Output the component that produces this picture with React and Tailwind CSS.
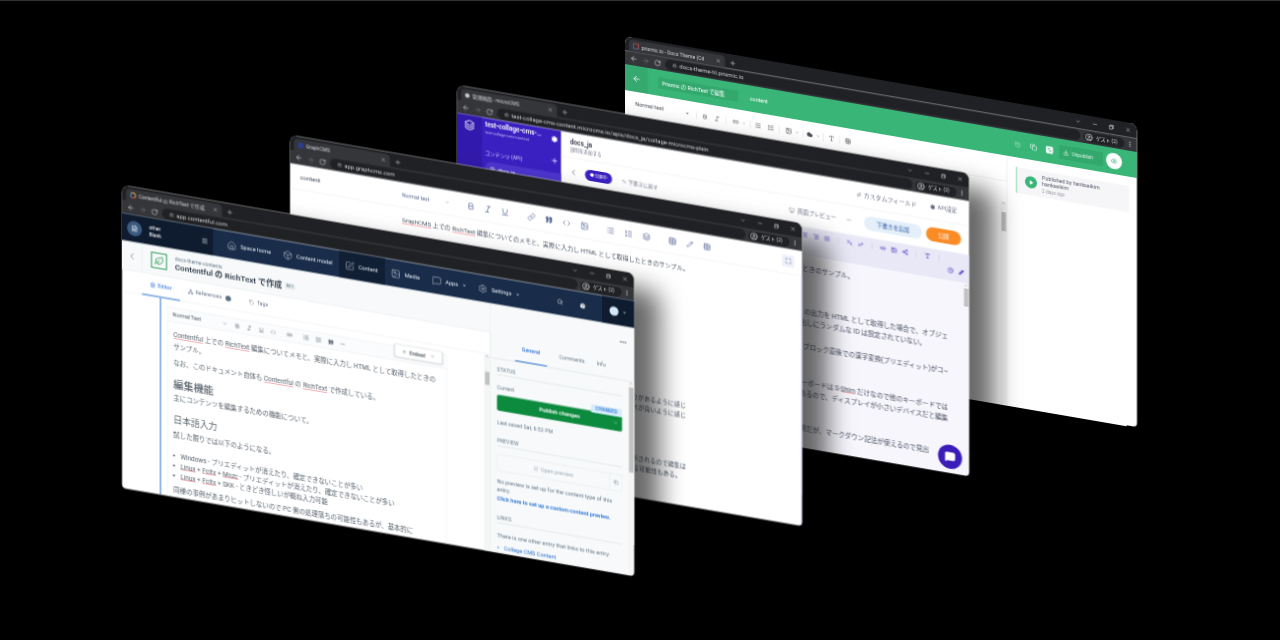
import {
  ArrowLeft, ArrowRight, RotateCw, Lock, Plus, X, Minus, ChevronDown, ChevronLeft, CircleUser, EllipsisVertical,
  Ellipsis, Copy, Home, Box, SquarePen, Image, Settings, Search, CircleHelp, FileText, Network, Tag, Bold, Italic,
  Underline, Code, Link2, List, ListOrdered, Quote, Leaf, Menu, Link, Table, Pencil, Maximize, Paperclip, Share2,
  Eye, Download, History, Languages, Cloud, Play, MessageSquare, Undo2, Monitor, Superscript, Subscript, AlignCenter,
  AlignLeft, AlignRight, AlignJustify, Type, Layers,
} from 'lucide-react'

function RestoreIcon() {
  return <svg width="10" height="10" viewBox="0 0 10 10" fill="none" stroke="currentColor" strokeWidth="1.2"><rect x="1" y="3" width="6" height="6" /><path d="M3 3V1h6v6H7" /></svg>
}

// Chrome guest window, laid out at twice its on-screen size
function Browser({ pos, favicon, title, url, children }) {
  return (
    <div className={`absolute left-0 top-0 flex h-[606px] w-[1024px] origin-top-left flex-col overflow-hidden rounded-t-[14px] rounded-b-[8px] bg-white blur-[1.3px] ${pos}`}>
      <div className="flex h-[29px] shrink-0 items-end bg-[#202124] pl-[8px]">
        <div className="flex h-[24px] w-[192px] items-center gap-[5px] rounded-t-[8px] bg-[#35363a] px-[8px] text-[#d5d6d8]">
          {favicon}
          <span className="flex-1 whitespace-nowrap text-[10px]">{title}</span>
          <X size={11} className="shrink-0" />
        </div>
        <div className="flex h-[24px] w-[30px] items-center justify-center text-[#d5d6d8]"><Plus size={13} /></div>
        <div className="flex-1" />
        <div className="flex h-[29px] w-[124px] items-center justify-between pr-[12px] text-[#d5d6d8]">
          <ChevronDown size={12} />
          <Minus size={12} />
          <RestoreIcon />
          <X size={12} />
        </div>
      </div>
      <div className="flex h-[27px] shrink-0 items-center bg-[#35363a] pl-[10px] pr-[8px] text-[#d5d6d8]">
        <ArrowLeft size={15} className="mr-[9px]" />
        <ArrowRight size={15} className="mr-[9px] text-[#75767a]" />
        <RotateCw size={14} className="mr-[8px]" />
        <div className="flex h-[21px] flex-1 items-center gap-[5px] rounded-full bg-[#202124] px-[15px]">
          <Lock size={9} />
          <span className="whitespace-nowrap text-[11.7px] text-[#c9cacc]">{url}</span>
        </div>
        <div className="ml-[6px] flex h-[20px] w-[82px] items-center gap-[6px] rounded-full bg-[#202124] px-[3px]">
          <CircleUser size={16} />
          <span className="text-[9.5px]">ゲスト (2)</span>
        </div>
        <EllipsisVertical size={13} className="ml-[4px]" />
      </div>
      {children}
    </div>
  )
}

function Misspelt({ children }) {
  return <span className="underline decoration-[#e8616b] decoration-1 underline-offset-2">{children}</span>
}

function Scrollbar({ thumb = 'mt-[14px] h-[42px]', className = '' }) {
  return (
    <div className={`flex w-[12px] shrink-0 flex-col items-center bg-[#f5f5f5] ${className}`}>
      <ChevronDown size={8} className="shrink-0 rotate-180 text-[#555]" />
      <div className={`w-[9px] shrink-0 bg-[#c1c1c1] ${thumb}`} />
    </div>
  )
}

function NavItem({ icon: Icon, label, className, active, caret }) {
  return (
    <div className={`flex h-full items-center gap-[8px] text-[#dfe5ee] ${className} ${active ? 'bg-[#111f35]' : ''}`}>
      <Icon size={19} strokeWidth={1.2} />
      <span className="text-[11px]">{label}</span>
      {caret && <ChevronDown size={9} fill="currentColor" />}
    </div>
  )
}

function SideHeading({ children, className = '' }) {
  return <div className={`border-b border-[#d3dce0] pb-[3px] text-[10px] leading-[14px] tracking-wide text-[#6b7c8d] ${className}`}>{children}</div>
}

function ContentfulWindow() {
  return (
    <Browser
      pos="[transform:matrix(0.5,0.086,0,0.5,122,185)]"
      favicon={<span className="size-[12px] shrink-0 rounded-full border-2 border-[#e8b04a] border-b-[#d9534f] border-l-[#4a90d9]" />}
      title="Contentful の RichText で作成"
      url="app.contentful.com"
    >
      <div className="flex h-[54px] shrink-0 bg-[#192d4a] text-white">
        <div className="flex w-[182px] items-center bg-[#0f1c30] pl-[10px]">
          <div className="flex size-[30px] items-center justify-center rounded-full bg-[#3a5a80]"><FileText size={14} /></div>
          <div className="ml-[14px] flex-1 text-[10px] leading-[14px]">
            <div>other</div>
            <div>Blank</div>
          </div>
          <Menu size={13} className="mr-[10px]" />
        </div>
        <NavItem icon={Home} label="Space home" className="w-[126px] pl-[28px]" />
        <NavItem icon={Box} label="Content model" className="w-[126px] pl-[14px]" />
        <NavItem icon={SquarePen} label="Content" className="w-[92px] pl-[12px]" active />
        <NavItem icon={Image} label="Media" className="w-[82px] pl-[12px]" />
        <NavItem icon={MessageSquare} label="Apps" className="w-[92px] pl-[12px]" caret />
        <NavItem icon={Settings} label="Settings" className="w-[100px] pl-[12px]" caret />
        <div className="flex flex-1 items-center gap-[33px] pl-[70px]">
          <Search size={12} />
          <CircleHelp size={13} fill="white" className="text-[#192d4a]" />
        </div>
        <div className="flex w-[64px] items-center justify-center gap-[8px] bg-[#0f1c30]">
          <span className="size-[18px] rounded-full bg-[#d5e8fa]" />
          <ChevronDown size={8} fill="currentColor" />
        </div>
      </div>
      <div className="flex min-h-0 flex-1">
        <div className="flex w-[737px] flex-col border-r border-[#d3dce0]">
          <div className="flex h-[58px] shrink-0 items-center border-b border-[#e5ebed] bg-[#f7f9fa]">
            <div className="flex h-full w-[40px] items-center justify-center border-r border-[#e5ebed] text-[#8091a5]"><ChevronLeft size={20} /></div>
            <div className="ml-[18px] flex size-[32px] items-center justify-center border-2 border-[#2e9e5b] text-[#2e9e5b]"><Leaf size={20} /></div>
            <div className="ml-[16px]">
              <div className="text-[10px] leading-[12px] text-[#6b7c8d]">docs-theme-contents</div>
              <div className="flex items-center gap-[6px] text-[16px] font-semibold leading-[20px] text-[#36404d]">
                Contentful の RichText で作成
                <span className="rounded-[2px] bg-[#e5ebed] px-[3px] text-[8px] font-normal leading-[12px]">ID 1</span>
              </div>
            </div>
          </div>
          <div className="flex h-[45px] shrink-0 border-b border-[#e5ebed] pl-[40px] text-[10.5px] text-[#6b7c8d]">
            <div className="flex w-[76px] items-center justify-center gap-[4px] border-b-2 border-[#2e75d4] text-[11px] text-[#2e75d4]"><FileText size={11} />Editor</div>
            <div className="ml-[16px] flex items-center gap-[4px]"><Network size={11} />References<span className="ml-[4px] size-[11px] rounded-full bg-[#5a6f87]" /></div>
            <div className="ml-[36px] flex items-center gap-[4px]"><Tag size={11} />Tags</div>
          </div>
          <div className="flex min-h-0 flex-1 pl-[76px]">
            <div className="w-[2px] bg-[#2e75d4]" />
            <div className="relative ml-[12px] mt-[15px] flex w-[560px] flex-col border-x border-t border-[#e5ebed]">
              <div className="flex h-[27px] shrink-0 items-center border-b border-[#e5ebed] bg-[#fbfcfd] text-[#4c5864]">
                <span className="ml-[10px] w-[100px] text-[10.5px]">Normal Text</span>
                <ChevronDown size={10} />
                <div className="ml-[14px] flex items-center gap-[13px]">
                  <Bold size={11} /><Italic size={11} /><Underline size={11} /><Code size={11} />
                  <Link2 size={12} className="ml-[8px]" />
                  <List size={12} className="ml-[8px]" /><ListOrdered size={12} /><Quote size={11} fill="currentColor" /><Minus size={11} />
                </div>
              </div>
              <div className="absolute right-[8px] top-[-6px] flex h-[26px] w-[96px] items-center justify-center gap-[6px] rounded-[4px] border border-[#d3dce0] bg-white text-[10px] font-semibold text-[#4c5864] shadow-sm">
                <Plus size={9} />Embed<ChevronDown size={10} className="ml-[4px]" />
              </div>
              <div className="flex-1 pl-[12px] text-[12.7px] leading-[24px] text-[#59636e]">
                <p className="mt-[14px] w-[540px]"><Misspelt>Contentful</Misspelt> 上での <Misspelt>RichText</Misspelt> 編集についてメモと、実際に入力し HTML として取得したときの<br />サンプル。</p>
                <p className="mt-[8px] whitespace-nowrap">なお、このドキュメント自体も <Misspelt>Contentful</Misspelt> の <Misspelt>RichText</Misspelt> で作成している。</p>
                <h2 className="mt-[17px] text-[20px] font-medium leading-[28px]">編集機能</h2>
                <p className="mt-[1px]">主にコンテンツを編集するための機能について。</p>
                <h3 className="mt-[17px] text-[17.5px] leading-[28px]">日本語入力</h3>
                <p className="mt-[5px]">試した限りでは以下のようになる。</p>
                <ul className="mt-[19px] list-disc pl-[14px] leading-[20px]">
                  <li>Windows - プリエディットが消えたり、確定できないことが多い</li>
                  <li className="whitespace-nowrap"><Misspelt>Linux</Misspelt> + <Misspelt>Fcitx</Misspelt> + <Misspelt>Mozc</Misspelt> - プリエディットが消えたり、確定できないことが多い</li>
                  <li className="whitespace-nowrap"><Misspelt>Linux</Misspelt> + <Misspelt>Fcitx</Misspelt> + SKK - ときどき怪しいが概ね入力可能</li>
                </ul>
                <p className="mt-[7px] whitespace-nowrap">同様の事例があまりヒットしないので PC 側の処理落ちの可能性もあるが、基本的に</p>
              </div>
            </div>
            <div className="flex-1" />
            <Scrollbar thumb="mt-[27px] h-[26px]" />
          </div>
        </div>
        <div className="flex min-w-0 flex-1 flex-col bg-[#f7f9fa]">
          <div className="flex h-[58px] shrink-0 justify-end pr-[14px] pt-[24px] text-[#36404d]"><Ellipsis size={16} /></div>
          <div className="flex h-[50px] shrink-0 items-end gap-[24px] border-b border-[#d3dce0] pl-[49px] text-[10.5px] text-[#6b7c8d]">
            <div className="w-[64px] border-b-2 border-[#2e75d4] pb-[16px] text-center font-medium text-[#2e75d4]">General</div>
            <div className="pb-[16px]">Comments</div>
            <div className="pb-[16px]">Info</div>
          </div>
          <div className="flex min-h-0 flex-1">
            <div className="min-w-0 flex-1 pl-[13px] pr-[12px] pt-[14px] text-[11px] text-[#6b7c8d]">
              <SideHeading>STATUS</SideHeading>
              <div className="mt-[19px] text-[10.5px] leading-[14px]">Current</div>
              <div className="relative mt-[7px] flex h-[32px] items-center justify-center rounded-[4px] bg-[#0c8a3e] text-[11px] font-semibold text-white">
                Publish changes
                <ChevronDown size={10} className="absolute right-[8px]" />
                <span className="absolute right-0 top-[-13px] flex h-[16px] w-[62px] items-center justify-center rounded-[2px] bg-[#d5ecfb] text-[9px] font-semibold tracking-wide text-[#2e75d4]">CHANGED</span>
              </div>
              <div className="mt-[17px] text-[10.5px] leading-[14px]">Last saved Sat, 6:52 PM</div>
              <SideHeading className="mt-[22px]">PREVIEW</SideHeading>
              <div className="mt-[15px] flex h-[34px]">
                <div className="flex flex-1 items-center justify-center gap-[4px] rounded-l-[3px] border border-[#e5ebed] text-[11px] text-[#a5b0bb]"><SquarePen size={10} />Open preview</div>
                <div className="flex w-[24px] items-center justify-center border-y border-r border-[#e5ebed]"><Copy size={10} /></div>
              </div>
              <p className="mt-[13px] leading-[16px]">No preview is set up for the content type of this entry.</p>
              <p className="mt-[4px] whitespace-nowrap font-semibold leading-[14px] text-[#2e75d4]">Click here to set up a custom content preview.</p>
              <SideHeading className="mt-[24px]">LINKS</SideHeading>
              <p className="mt-[18px] whitespace-nowrap leading-[14px]">There is one other entry that links to this entry:</p>
              <ul className="mt-[9px] list-disc pl-[14px] leading-[14px] text-[#2e75d4]"><li>College CMS Content</li></ul>
            </div>
            <Scrollbar thumb="mt-[4px] h-[170px]" />
          </div>
        </div>
      </div>
    </Browser>
  )
}

function GraphcmsWindow() {
  return (
    <Browser
      pos="[transform:matrix(0.5,0.086,0,0.5,290,135)]"
      favicon={<span className="size-[11px] shrink-0 rounded-[2px] bg-[#2c3e8f]" />}
      title="GraphCMS"
      url="app.graphcms.com"
    >
      <div className="flex h-[50px] shrink-0 items-center border-b border-[#e8eaf6] text-[#5c6a99]">
        <span className="ml-[20px] w-[204px] text-[12px] text-[#3f4a5c]">content</span>
        <span className="w-[86px] text-[10.5px]">Normal text</span>
        <ChevronDown size={9} />
        <div className="ml-[26px] flex items-center">
          <Bold size={17} className="w-[34px]" />
          <Italic size={17} className="w-[34px]" />
          <Underline size={17} className="w-[34px]" />
          <Link size={16} className="ml-[18px] w-[36px]" />
          <Quote size={15} fill="currentColor" className="w-[34px]" />
          <Code size={16} className="w-[36px]" />
          <Image size={16} className="w-[36px]" />
          <List size={16} className="ml-[16px] w-[36px]" />
          <ListOrdered size={16} className="w-[36px]" />
          <Layers size={16} className="w-[36px]" />
          <Table size={16} className="ml-[16px] w-[36px]" />
          <Pencil size={14} className="w-[34px]" />
          <Table size={15} className="w-[34px]" />
        </div>
        <div className="flex-1" />
        <div className="mr-[16px] flex size-[24px] items-center justify-center rounded-[3px] bg-[#eef0fa]"><Maximize size={13} /></div>
      </div>
      <div className="flex-1 border-r-2 border-[#c8cdf2] leading-[20px] text-[#4a5464]">
        <p className="mt-[15px] text-center text-[12.1px]"><Misspelt>GraphCMS</Misspelt> 上での <Misspelt>RichText</Misspelt> 編集についてのメモと、実際に入力し HTML として取得したときのサンプル。</p>
        <div className="ml-auto mr-[230px] mt-[254px] text-right text-[12px]">
          <p>りがあるように感じ</p>
          <p>スが良いように感じ</p>
          <p className="mt-[82px]">示されるので編集は</p>
          <p className="pr-[10px]">る可能性もある。</p>
        </div>
      </div>
    </Browser>
  )
}

function ToolDivider() {
  return <span className="mx-[6px] h-[12px] w-px bg-[#c5c5dc]" />
}

function MicrocmsWindow() {
  return (
    <Browser
      pos="[transform:matrix(0.5,0.086,0,0.5,457,85)]"
      favicon={<span className="size-[9px] shrink-0 rounded-full bg-[#c9cacc]" />}
      title="管理画面 - microCMS"
      url="test-collage-cms-content.microcms.io/apis/docs_ja/collage-microcms-plain"
    >
      <div className="flex min-h-0 flex-1">
        <div className="flex w-[208px] shrink-0 bg-[#3a1fc1] text-white">
          <div className="flex w-[50px] justify-center bg-[#3219ad] pt-[9px]"><Layers size={22} /></div>
          <div className="relative min-w-0 flex-1 pl-[6px] pt-[4px]">
            <div className="truncate text-[13px] font-semibold leading-[18px]">test-collage-cms-…</div>
            <div className="text-[8px] leading-[12px] text-[#c5bdf0]">test-collage-cms-content</div>
            <Settings size={14} fill="white" className="absolute right-[6px] top-[12px]" />
            <div className="mt-[30px] text-[10px] leading-[12px] text-[#d5d0f5]">コンテンツ (API)</div>
            <Plus size={16} className="absolute right-[5px] top-[54px]" />
            <div className="mt-[10px] flex h-[28px] items-center gap-[6px] rounded-l-full bg-[#4d35d0] pl-[10px] text-[10px]"><FileText size={10} />docs_ja</div>
          </div>
        </div>
        <div className="flex min-w-0 flex-1 flex-col">
          <div className="flex h-[50px] shrink-0 items-center border-b border-[#e8e8f0] text-[#6b6f85]">
            <div className="ml-[18px] flex-1">
              <div className="text-[13px] font-semibold leading-[16px] text-[#2f3345]">docs_ja</div>
              <div className="text-[9px] leading-[12px]">説明を追加する</div>
            </div>
            <span className="flex items-center gap-[4px] text-[12px]"><Paperclip size={10} />カスタムフィールド</span>
            <span className="ml-[26px] mr-[24px] flex items-center gap-[4px] text-[11px]"><Settings size={11} fill="currentColor" />API設定</span>
          </div>
          <div className="flex h-[58px] shrink-0 items-center text-[#6b6f85]">
            <ChevronLeft size={18} className="ml-[16px]" />
            <span className="ml-[14px] flex h-[22px] w-[54px] items-center justify-center gap-[2px] rounded-full bg-[#3a1fc1] text-[8px] text-white">● 公開中</span>
            <span className="ml-[20px] flex items-center gap-[3px] text-[10px]"><Undo2 size={9} />下書きに戻す</span>
            <div className="flex-1" />
            <span className="flex items-center gap-[6px] text-[11px]"><Monitor size={11} />画面プレビュー</span>
            <Minus size={12} className="ml-[20px]" />
            <span className="ml-[24px] flex h-[28px] w-[116px] items-center justify-center rounded-full bg-[#e4effa] text-[11px] text-[#2f5fa8]">下書きを追加</span>
            <span className="ml-[8px] mr-[16px] flex h-[28px] w-[70px] items-center justify-center rounded-full bg-[#fb8b24] text-[11px] text-white">公開</span>
          </div>
          <div className="flex h-[58px] shrink-0 flex-col bg-[#e8e8f6] pr-[10px] pt-[10px] text-[#3a1fc1]">
            <div className="flex items-center justify-end gap-[10px] pr-[44px]">
              <AlignLeft size={12} /><AlignCenter size={12} /><AlignRight size={12} /><AlignJustify size={12} />
              <ToolDivider />
              <Subscript size={12} /><Superscript size={12} />
              <ToolDivider />
              <Link2 size={12} /><Image size={12} /><Share2 size={12} />
              <ToolDivider />
              <Type size={12} />
              <ToolDivider />
            </div>
            <div className="mt-[9px] flex items-center justify-end gap-[10px]">
              <CircleHelp size={12} /><Pencil size={11} fill="currentColor" />
            </div>
          </div>
          <div className="relative flex min-h-0 flex-1 bg-[#f6f6fc]">
            <div className="flex-1 pr-[30px] pt-[13px] text-right text-[13px] leading-[23px] text-[#4a4e60]">
              <p className="pr-[188px]">たときのサンプル。</p>
              <p className="mt-[63px]">の出力を HTML として取得した場合で、オブジェ</p>
              <p className="pr-[44px]">出しにランダムな ID は設定されていない。</p>
              <p className="mt-[24px]">ブロック直後での漢字変換(プリエディット)がコ~</p>
              <p className="mt-[49px]">ーボードは S-<Misspelt>Shim</Misspelt> だけなので他のキーボードでは</p>
              <p>あるので、ディスプレイが小さいデバイスだと編集</p>
              <p className="mt-[47px] pr-[38px]">不明だが、マークダウン記法が使えるので見出</p>
            </div>
            <Scrollbar className="bg-[#f6f6fc]" thumb="mt-[2px] h-[36px]" />
            <div className="absolute bottom-[8px] right-[14px] flex size-[48px] items-center justify-center rounded-full bg-[#3a1db8] text-white">
              <MessageSquare size={22} fill="white" />
            </div>
          </div>
        </div>
      </div>
    </Browser>
  )
}

function PrismicWindow() {
  return (
    <Browser
      pos="[transform:matrix(0.5,0.086,0,0.5,625,36)]"
      favicon={<span className="size-[12px] shrink-0 rounded-[2px] border-2 border-[#e0574c] border-b-[#3fa5d8] border-l-[#6f4cc9]" />}
      title="prismic.io - Docs Theme (Cd"
      url="docs-theme-hl.prismic.io"
    >
      <div className="flex h-[52px] shrink-0 items-center bg-[#39b577] text-white">
        <div className="flex h-full w-[46px] items-center justify-center bg-[#35a96f]"><ArrowLeft size={18} /></div>
        <div className="ml-[20px] flex h-[22px] w-[160px] items-center bg-[#33a86d] pl-[8px] text-[10.5px]">Prismic の RichText で編集</div>
        <span className="ml-[24px] text-[10.5px]">content</span>
        <div className="flex-1" />
        <History size={13} className="mr-[18px] text-[#b6e6cd]" />
        <Copy size={14} className="mr-[18px]" />
        <span className="mr-[12px] flex size-[14px] items-center justify-center rounded-[2px] bg-white text-[#39b577]"><Languages size={10} /></span>
        <div className="flex h-[28px] w-[88px] items-center gap-[6px] bg-[#33a86d] pl-[8px] text-[9.5px] text-[#d7f2e4]"><Download size={12} className="text-white" />Unpublish</div>
        <span className="ml-[6px] mr-[30px] flex size-[32px] items-center justify-center rounded-full bg-white text-[#39b577]"><Eye size={14} /></span>
      </div>
      <div className="flex min-h-0 flex-1">
        <div className="flex w-[764px] shrink-0 flex-col border-r border-[#e4e4e8]">
          <div className="flex h-[52px] shrink-0 items-center border-b border-[#e8e8ec] text-[#4a4f57]">
            <span className="ml-[20px] w-[100px] text-[11px]">Normal text</span>
            <ChevronDown size={9} fill="currentColor" />
            <span className="ml-[14px] h-[16px] w-px bg-[#ddd]" />
            <Bold size={12} className="ml-[10px]" />
            <Italic size={12} className="ml-[12px]" />
            <span className="ml-[12px] h-[16px] w-px bg-[#ddd]" />
            <Link2 size={13} className="ml-[12px]" />
            <ChevronDown size={8} className="ml-[6px]" />
            <span className="ml-[8px] h-[16px] w-px bg-[#ddd]" />
            <List size={13} className="ml-[8px]" />
            <ListOrdered size={13} className="ml-[13px]" />
            <span className="ml-[10px] h-[16px] w-px bg-[#ddd]" />
            <Image size={13} className="ml-[12px]" />
            <ChevronDown size={8} className="ml-[6px]" />
            <span className="ml-[8px] h-[16px] w-px bg-[#ddd]" />
            <Cloud size={13} fill="currentColor" className="ml-[6px]" />
            <ChevronDown size={8} className="ml-[6px]" />
            <span className="ml-[6px] h-[16px] w-px bg-[#ddd]" />
            <Type size={12} className="ml-[10px]" />
            <span className="ml-[10px] h-[16px] w-px bg-[#ddd]" />
            <Table size={12} className="ml-[10px]" />
          </div>
          <div className="flex min-h-0 flex-1 justify-end bg-white">
            <Scrollbar className="mt-[40px]" thumb="mt-[14px] h-[38px]" />
          </div>
        </div>
        <div className="min-w-0 flex-1 pl-[18px] pr-[16px] pt-[19px]">
          <div className="flex h-[52px] items-center border-l-2 border-[#8bd8b0] bg-[#f6f6f8] pl-[16px]">
            <span className="flex size-[24px] shrink-0 items-center justify-center rounded-full bg-[#39b577] text-white"><Play size={9} fill="white" /></span>
            <div className="ml-[10px] text-[10.5px] leading-[11px] text-[#555a68]">
              <div className="whitespace-nowrap">Published by hankseikim</div>
              <div>hankseikim</div>
              <div className="mt-[4px] text-[9.5px] text-[#9a9ea8]">2 days ago</div>
            </div>
          </div>
        </div>
      </div>
    </Browser>
  )
}

export default function App() {
  return (
    <div className="relative h-[640px] w-[1280px] overflow-hidden border-t border-[#333] bg-black font-['Roboto','Noto_Sans_CJK_JP',sans-serif]">
      <div className="absolute -top-px left-0">
        <PrismicWindow />
        <div className="contents [&>div]:shadow-[50px_30px_50px_rgba(0,0,0,0.6)]">
          <MicrocmsWindow />
          <GraphcmsWindow />
          <ContentfulWindow />
        </div>
      </div>
    </div>
  )
}
